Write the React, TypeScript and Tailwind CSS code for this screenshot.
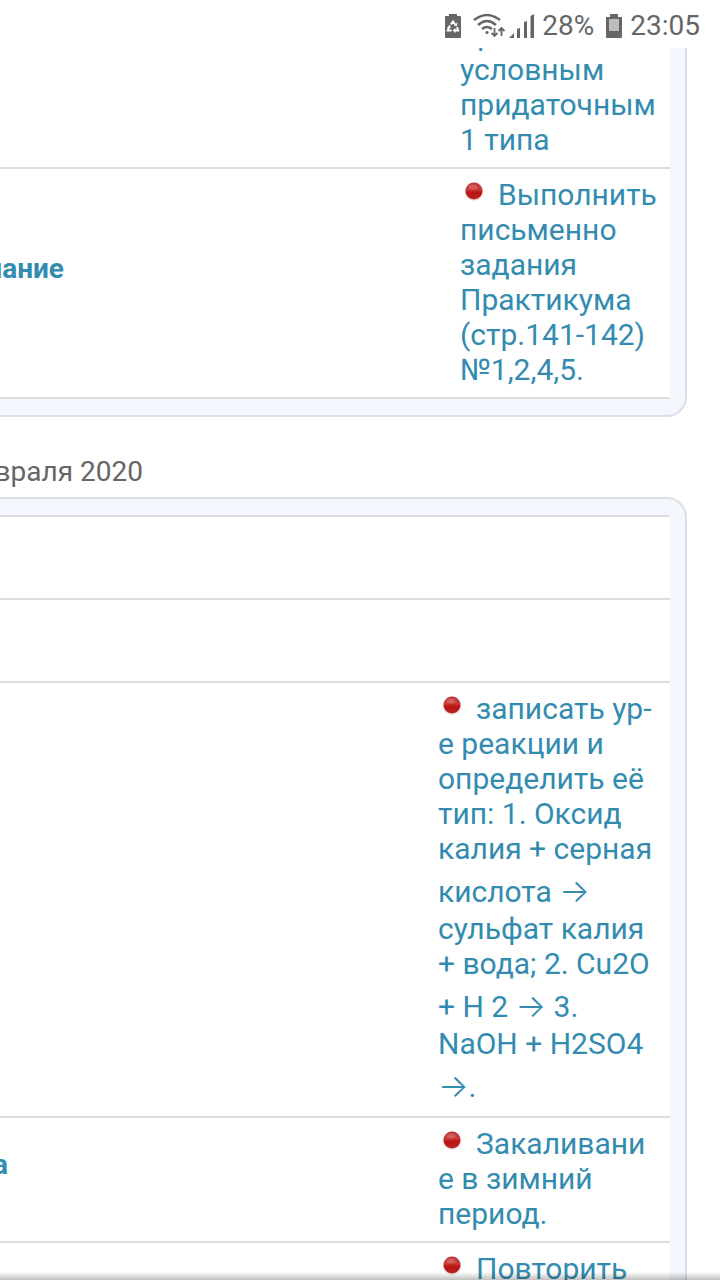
type Row = {
  subject?: string;
  subjectWidth?: string;
  lines?: string[];
  bullet?: boolean;
};

const firstDay: Row[] = [
  { lines: ['пр', 'условным', 'придаточным', '1 типа'] },
  {
    subject: 'Обществознание',
    subjectWidth: 'w-16',
    bullet: true,
    lines: [
      'Выполнить',
      'письменно',
      'задания',
      'Практикума',
      '(стр.141-142)',
      '№1,2,4,5.',
    ],
  },
];

const secondDay: Row[] = [
  {},
  {},
  {
    bullet: true,
    lines: [
      'записать ур-',
      'е реакции и',
      'определить её',
      'тип: 1. Оксид',
      'калия + серная',
      'кислота →',
      'сульфат калия',
      '+ вода; 2. Cu2O',
      '+ H 2 → 3.',
      'NaOH + H2SO4',
      '→.',
    ],
  },
  {
    subject: 'Физкультура',
    subjectWidth: 'w-2',
    bullet: true,
    lines: ['Закаливани', 'е в зимний', 'период.'],
  },
  { bullet: true, lines: ['Повторить'] },
];

function RedDot() {
  return (
    <svg viewBox="0 0 20 20" className="mr-3.5 ml-1 inline-block size-5 -translate-y-1 align-baseline" aria-hidden="true">
      <defs>
        <linearGradient id="dot" x1="0" y1="0" x2="0" y2="1">
          <stop offset="0" stopColor="#b8383a" />
          <stop offset="0.4" stopColor="#c83c3a" />
          <stop offset="0.6" stopColor="#b81414" />
          <stop offset="1" stopColor="#c02422" />
        </linearGradient>
      </defs>
      <circle cx="10" cy="10.5" r="9.3" fill="#d8c4c4" opacity="0.6" />
      <circle cx="10" cy="10" r="8.5" fill="url(#dot)" />
      <ellipse cx="9" cy="6" rx="4.5" ry="2.5" fill="#e07c7a" opacity="0.5" />
    </svg>
  );
}

function Line({ text, bullet }: { text: string; bullet?: boolean }) {
  if (text.includes('→')) {
    const [before, after] = text.split('→');
    return (
      <span className="block pt-[7px] leading-[38px] whitespace-pre">
        {before}
        <span className="font-['Inter',sans-serif] text-[32px] leading-none font-light">→</span>
        {after}
      </span>
    );
  }
  return (
    <span className="block leading-[35px] whitespace-nowrap">
      {bullet && <RedDot />}
      {text}
    </span>
  );
}

function DayPanel({ rows, column, className }: { rows: Row[]; column: string; className: string }) {
  return (
    <section className={`mr-[33px] border-[#dcdfe5] bg-[#f3f6fc] pr-[15px] ${className}`}>
      <table className="w-full table-fixed border-collapse bg-white">
        <tbody>
          {rows.map((row, i) => (
            <tr key={i} className="h-[83px] border-y-2 border-[#dddddf]">
              <td className="pb-[30px] align-middle">
                {row.subject && (
                  <div className={`flex justify-end overflow-hidden text-[28px] leading-[35px] font-bold ${row.subjectWidth}`}>
                    {row.subject}
                  </div>
                )}
              </td>
              <td className={`pt-2 pb-2.5 align-top ${column}`}>
                {row.lines && (
                  <a href="#homework" className="block text-[30px]">
                    {row.lines.map((line, n) => (
                      <Line key={n} text={line} bullet={row.bullet && n === 0} />
                    ))}
                  </a>
                )}
              </td>
            </tr>
          ))}
        </tbody>
      </table>
    </section>
  );
}

function StatusBar() {
  return (
    <header className="z-10 flex h-12 shrink-0 items-center justify-end bg-white pt-1 pr-5 text-[28px] text-[#666]">
      <svg viewBox="0 0 16 24" className="mr-3 h-6 w-4" fill="currentColor" aria-hidden="true">
        <path d="M4 0h8v2h3q1 0 1 1v20q0 1-1 1H1q-1 0-1-1V3q0-1 1-1h3z" />
        <path d="m5.800 10.500 2.200-3 2.200 3M12 13l1.200 3.500H10M6.500 16.500H2.800L4 13" fill="none" stroke="#fff" strokeWidth="2" />
        <path d="m8.500 11.500 3.500.5.300-3.500zM10.500 14v5L7.500 16.500zM2 13.800l2.500-3 1.800 3.200z" fill="#fff" />
      </svg>
      <svg viewBox="0 0 32 24" className="mr-1 h-6 w-8" fill="none" stroke="currentColor" strokeWidth="2.4" aria-hidden="true">
        <path d="M1 6Q14-4 27 6M5 11q9-8 18 0M9 15q5-4 10 0" />
        <circle cx="14" cy="18.500" r="1.600" fill="currentColor" stroke="none" />
        <path d="M21.500 14v8m-3-3 3 3 3-3M28.500 22v-8m-3 3 3-3 3 3" strokeWidth="1.800" />
      </svg>
      <svg viewBox="0 0 25 24" className="mr-2 h-6 w-[25px]" fill="currentColor" aria-hidden="true">
        <path d="m0 24 5-5v5zM8 15l3-1v10H8zM15 8l3-1v17h-3zM21.500 2 25 0v24h-3.500z" />
      </svg>
      <span>28%</span>
      <svg viewBox="0 0 16 24" className="mr-2 ml-3 h-6 w-4" fill="currentColor" aria-hidden="true">
        <path d="M4 0h8v3h4v20q0 1-1 1H1q-1 0-1-1V3h4z" />
        <path d="M3 5h10v12H3z" fill="#bdbdbd" />
      </svg>
      <time dateTime="23:05">23:05</time>
    </header>
  );
}

export default function App() {
  return (
    <div className="relative flex h-screen flex-col overflow-hidden bg-white font-['Roboto',sans-serif] text-[#338cb0]">
      <StatusBar />
      <main className="min-h-0 flex-1 overflow-hidden">
        <div className="-mt-[41px]">
          <DayPanel rows={firstDay} column="w-[210px]" className="rounded-br-[20px] border-r-2 border-b-2 pb-4" />
          <h2 className="flex h-20 w-[143px] items-center justify-end overflow-hidden pt-7 text-[28px] leading-[35px] whitespace-nowrap text-[#666]">
            14 февраля 2020
          </h2>
          <DayPanel rows={secondDay} column="w-[232px]" className="rounded-tr-[20px] border-t-2 border-r-2 pt-4" />
        </div>
      </main>
      <div className="pointer-events-none absolute inset-x-0 bottom-0 h-2 bg-linear-to-b from-transparent to-black/25" />
    </div>
  );
}
